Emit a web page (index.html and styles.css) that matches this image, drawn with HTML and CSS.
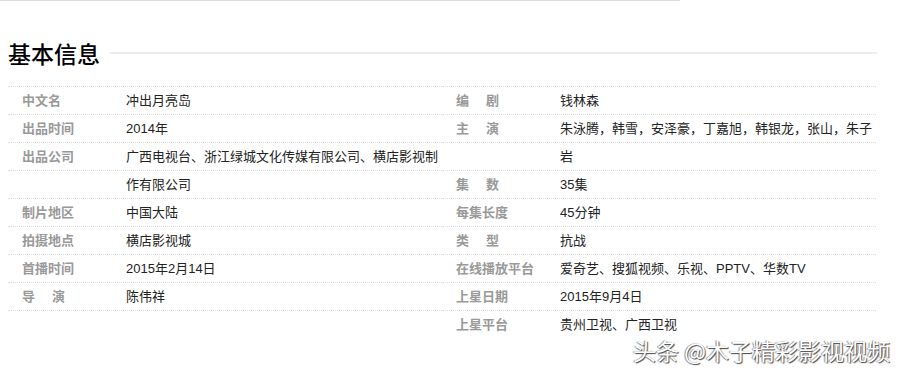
FILE: index.html
```html
<!DOCTYPE html>
<html>
  <head>
    <link rel="stylesheet" href="styles.css">
    <title>基本信息</title>
  </head>
  <body>
    <div class="top-line"></div>

    <div class="section-title">
      <h2>基本信息</h2>
      <span class="title-line"></span>
    </div>

    <div class="info">
      <div class="info-col left">
        <div class="row"><span class="label">中文名</span><span class="value">冲出月亮岛</span></div>
        <div class="row"><span class="label">出品时间</span><span class="value">2014年</span></div>
        <div class="row"><span class="label">出品公司</span><span class="value">广西电视台、浙江绿城文化传媒有限公司、横店影视制</span></div>
        <div class="row"><span class="label"></span><span class="value">作有限公司</span></div>
        <div class="row"><span class="label">制片地区</span><span class="value">中国大陆</span></div>
        <div class="row"><span class="label">拍摄地点</span><span class="value">横店影视城</span></div>
        <div class="row"><span class="label">首播时间</span><span class="value">2015年2月14日</span></div>
        <div class="row"><span class="label spaced">导演</span><span class="value">陈伟祥</span></div>
      </div>

      <div class="info-col right">
        <div class="row"><span class="label spaced">编剧</span><span class="value">钱林森</span></div>
        <div class="row"><span class="label spaced">主演</span><span class="value">朱泳腾，韩雪，安泽豪，丁嘉旭，韩银龙，张山，朱子</span></div>
        <div class="row"><span class="label"></span><span class="value">岩</span></div>
        <div class="row"><span class="label spaced">集数</span><span class="value">35集</span></div>
        <div class="row"><span class="label">每集长度</span><span class="value">45分钟</span></div>
        <div class="row"><span class="label spaced">类型</span><span class="value">抗战</span></div>
        <div class="row"><span class="label">在线播放平台</span><span class="value">爱奇艺、搜狐视频、乐视、PPTV、华数TV</span></div>
        <div class="row"><span class="label">上星日期</span><span class="value">2015年9月4日</span></div>
        <div class="row"><span class="label">上星平台</span><span class="value">贵州卫视、广西卫视</span></div>
      </div>
    </div>

    <div class="watermark">头条 @木子精彩影视视频</div>
  </body>
</html>
```

FILE: styles.css
```css
body {
  margin: 0;
  font-family: "Liberation Sans", "Noto Sans CJK SC", sans-serif;
  background: #fff;
  color: #333;
}

.top-line {
  width: 680px;
  height: 1px;
  background: #dcdcdc;
}

.section-title {
  display: flex;
  align-items: center;
  width: 869px;
  height: 30px;
  margin: 37px 0 0 8px;
}

.section-title h2 {
  margin: 0;
  font-family: "Noto Sans CJK SC", sans-serif;
  font-size: 23px;
  font-weight: 500;
  line-height: 30px;
  color: #000;
}

.title-line {
  flex: 1;
  height: 2px;
  margin-left: 10px;
  background: #ededed;
}

.info {
  display: flex;
  width: 868px;
  margin: 18px 0 0 8px;
}

.info-col {
  width: 434px;
}

.info-col.right {
  flex: 1;
}

.info-col.left .row:last-child {
  border-bottom: 1px dotted #dcdcdc;
}

.row {
  display: flex;
  border-top: 1px dotted #dcdcdc;
  font-size: 13px;
  line-height: 27px;
}

.label {
  flex: none;
  width: 104px;
  padding-left: 14px;
  color: #999;
  font-weight: bold;
}

.label.spaced {
  letter-spacing: 17px;
}

.value {
  flex: 1;
  color: #222;
}

.watermark {
  position: absolute;
  left: 633px;
  top: 334px;
  font-family: "Noto Sans CJK SC", sans-serif;
  font-size: 23px;
  line-height: 32px;
  color: #fff;
  text-shadow: 1px 1px 1px #444, -1px 0 1px #888;
}
```
